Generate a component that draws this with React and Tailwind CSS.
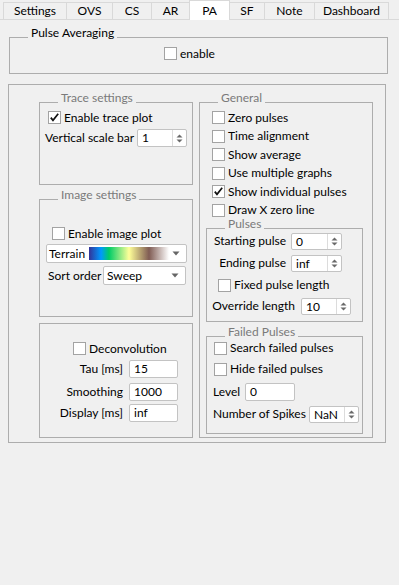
import React from 'react';

const tabs = [
    { name: 'Settings', w: 'w-[64px]' },
    { name: 'OVS', w: 'w-[47px]' },
    { name: 'CS', w: 'w-[40px]' },
    { name: 'AR', w: 'w-[39px]' },
    { name: 'PA', w: 'w-[41px]', active: true },
    { name: 'SF', w: 'w-[36px]' },
    { name: 'Note', w: 'w-[51px]' },
    { name: 'Dashboard', w: 'w-[75px]' },
];

const GroupBox = ({ title, dark, className, children }) => (
    <div className={`relative border border-[#adadad] ${className}`}>
        <span
            className={`absolute left-[18px] top-[-13px] px-[3px] leading-[16px] bg-[#f0f0f0] whitespace-nowrap ${dark ? 'text-black' : 'text-[#7a7a7a]'}`}
        >
            {title}
        </span>
        {children}
    </div>
);

const CheckBox = ({ checked, label, className = '' }) => (
    <div className={`flex items-center h-[13px] ${className}`}>
        <div className="w-[13px] h-[13px] shrink-0 border border-[#a3a3a3] bg-white flex items-center justify-center">
            {checked && (
                <svg width="11" height="11" viewBox="0 0 11 11">
                    <path d="M1.8 5.6 L4 8.4 L9.2 1.8" fill="none" stroke="#111" strokeWidth="1.7" />
                </svg>
            )}
        </div>
        <span className="ml-[3px] leading-[16px] whitespace-nowrap">{label}</span>
    </div>
);

const SpinBox = ({ value, w, h = 'h-[17px]' }) => (
    <div className={`flex ${w} ${h} bg-white border border-[#c3c3c3] rounded-[2px] shrink-0`}>
        <div className="flex-1 pl-[4px] leading-[15px]">{value}</div>
        <div className="w-[14px] border-l border-[#dcdcdc] flex flex-col items-center justify-center gap-[1px]">
            <svg width="7" height="4" viewBox="0 0 7 4">
                <path d="M0.5 3.5 L3.5 0.5 L6.5 3.5 Z" fill="#6a6a6a" />
            </svg>
            <svg width="7" height="4" viewBox="0 0 7 4">
                <path d="M0.5 0.5 L3.5 3.5 L6.5 0.5 Z" fill="#6a6a6a" />
            </svg>
        </div>
    </div>
);

const LineEdit = ({ value, w }) => (
    <div className={`${w} h-[18px] bg-white border border-[#c3c3c3] rounded-[2px] pl-[4px] leading-[16px] shrink-0`}>
        {value}
    </div>
);

const DownArrow = () => (
    <svg width="8" height="5" viewBox="0 0 8 5" className="shrink-0">
        <path d="M0.5 0.5 L4 4.5 L7.5 0.5 Z" fill="#666" />
    </svg>
);

export default function App() {
    return (
        <div className="w-[399px] h-[585px] bg-[#f0f0f0] text-[12px] text-black font-['Lato',sans-serif] overflow-hidden">
            {/* tab bar */}
            <div className="h-[20px] border-b border-[#d9d9d9] flex items-end pl-[3px]">
                {tabs.map((t, i) => (
                    <div
                        key={t.name}
                        className={`${t.w} ${i > 0 ? '-ml-px' : ''} flex items-center justify-center border border-b-0 border-[#d9d9d9] leading-[16px] ${
                            t.active ? 'h-[20px] -mb-px bg-white relative z-10' : 'h-[17px] bg-[#f0f0f0]'
                        }`}
                    >
                        {t.name}
                    </div>
                ))}
            </div>

            {/* pulse averaging */}
            <GroupBox title="Pulse Averaging" dark className="mt-[17px] ml-[9px] w-[379px] h-[37px]">
                <CheckBox label="enable" className="ml-[154px] mt-[9px]" />
            </GroupBox>

            {/* main settings */}
            <div className="mt-[10px] ml-[8px] w-[378px] h-[359px] border border-[#adadad] pl-[30px] pt-[17px] flex gap-[6px]">
                <div className="w-[154px] flex flex-col">
                    <GroupBox title="Trace settings" className="h-[83px]">
                        <CheckBox checked label="Enable trace plot" className="ml-[8px] mt-[8px]" />
                        <div className="mt-[5px] px-[5px] flex items-center justify-between">
                            <span className="leading-[16px] whitespace-nowrap">Vertical scale bar</span>
                            <SpinBox value="1" w="w-[50px]" h="h-[18px]" />
                        </div>
                    </GroupBox>

                    <GroupBox title="Image settings" className="h-[118px] mt-[14px]">
                        <CheckBox label="Enable image plot" className="ml-[12px] mt-[27px]" />
                        <div className="mt-[4px] ml-[6px] w-[141px] h-[19px] bg-white border border-[#c3c3c3] rounded-[2px] flex items-center pl-[2px] pr-[6px]">
                            <span className="leading-[16px]">Terrain</span>
                            <div className="ml-[4px] w-[80px] h-[13px] bg-[linear-gradient(to_right,#333399,#0099ff_15%,#00cc66_25%,#ffff99_50%,#805c54_75%,#ffffff)]" />
                            <div className="flex-1" />
                            <DownArrow />
                        </div>
                        <div className="mt-[3px] pl-[8px] pr-[6px] flex items-center justify-between">
                            <span className="leading-[16px] whitespace-nowrap">Sort order</span>
                            <div className="w-[83px] h-[19px] bg-white border border-[#c3c3c3] rounded-[2px] flex items-center justify-between pl-[3px] pr-[6px]">
                                <span className="leading-[16px]">Sweep</span>
                                <DownArrow />
                            </div>
                        </div>
                    </GroupBox>

                    <div className="h-[115px] mt-[6px] border border-[#adadad]">
                        <CheckBox label="Deconvolution" className="ml-[33px] mt-[18px]" />
                        <div className="mt-[5px] pr-[14px] flex items-center justify-end gap-[6px]">
                            <span className="leading-[16px]">Tau [ms]</span>
                            <LineEdit value="15" w="w-[49px]" />
                        </div>
                        <div className="mt-[5px] pr-[14px] flex items-center justify-end gap-[6px]">
                            <span className="leading-[16px]">Smoothing</span>
                            <LineEdit value="1000" w="w-[49px]" />
                        </div>
                        <div className="mt-[3px] pr-[14px] flex items-center justify-end gap-[6px]">
                            <span className="leading-[16px]">Display [ms]</span>
                            <LineEdit value="inf" w="w-[49px]" />
                        </div>
                    </div>
                </div>

                <GroupBox title="General" className="w-[174px] h-[336px]">
                    <div className="ml-[12px] mt-[8px] flex flex-col gap-[5.6px]">
                        <CheckBox label="Zero pulses" />
                        <CheckBox label="Time alignment" />
                        <CheckBox label="Show average" />
                        <CheckBox label="Use multiple graphs" />
                        <CheckBox checked label="Show individual pulses" />
                        <CheckBox label="Draw X zero line" />
                    </div>

                    <GroupBox title="Pulses" className="ml-[6px] mt-[11px] w-[157px] h-[94px]">
                        <div className="mt-[4px] pr-[20px] flex items-center justify-end gap-[5px]">
                            <span className="leading-[16px] whitespace-nowrap">Starting pulse</span>
                            <SpinBox value="0" w="w-[51px]" />
                        </div>
                        <div className="mt-[5px] pr-[20px] flex items-center justify-end gap-[5px]">
                            <span className="leading-[16px] whitespace-nowrap">Ending pulse</span>
                            <SpinBox value="inf" w="w-[51px]" />
                        </div>
                        <CheckBox label="Fixed pulse length" className="ml-[11px] mt-[7px]" />
                        <div className="mt-[6px] pr-[11px] flex items-center justify-end gap-[6px]">
                            <span className="leading-[16px] whitespace-nowrap">Override length</span>
                            <SpinBox value="10" w="w-[50px]" />
                        </div>
                    </GroupBox>

                    <GroupBox title="Failed Pulses" className="ml-[6px] mt-[14px] w-[157px] h-[98px]">
                        <CheckBox label="Search failed pulses" className="ml-[7px] mt-[5px]" />
                        <CheckBox label="Hide failed pulses" className="ml-[7px] mt-[8px]" />
                        <div className="mt-[7px] pl-[6px] flex items-center">
                            <span className="w-[32px] leading-[16px]">Level</span>
                            <LineEdit value="0" w="w-[50px]" />
                        </div>
                        <div className="mt-[5px] pl-[6px] pr-[3px] flex items-center justify-between">
                            <span className="leading-[16px] whitespace-nowrap">Number of Spikes</span>
                            <SpinBox value="NaN" w="w-[50px]" />
                        </div>
                    </GroupBox>
                </GroupBox>
            </div>
        </div>
    );
}
